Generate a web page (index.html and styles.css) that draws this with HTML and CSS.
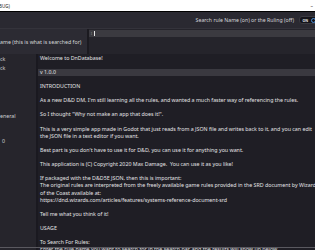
FILE: index.html
```html
<!DOCTYPE html>
<html>
<head>
<meta charset="utf-8">
<link rel="stylesheet" href="styles.css">
</head>
<body>
<div class="window">
  <div class="titlebar">
    <span class="title">BUG)</span>
    <span class="winctl">&ndash;</span>
  </div>
  <div class="toolbar">
    <span class="toolbar-label">Search rule Name (on) or the Ruling (off)</span>
    <span class="toggle"><span class="toggle-text">ON</span><span class="toggle-knob"></span></span>
  </div>
  <div class="searchrow">
    <div class="search-label">ame (this is what is searched for)</div>
    <div class="search-field">
      <div class="input"><span class="input-icon">I</span><span class="caret"></span></div>
    </div>
  </div>
  <div class="content">
    <div class="sidebar">
      <div class="side-item s1">ck</div>
      <div class="side-item s2">ck</div>
      <div class="side-item s3">eneral</div>
      <div class="side-item s4">0</div>
    </div>
    <div class="main">
      <p class="line">Welcome to DnDatabase!</p>
      <p class="line">&nbsp;</p>
      <p class="line selected">v 1.0.0</p>
      <p class="line">&nbsp;</p>
      <p class="line">INTRODUCTION</p>
      <p class="line">&nbsp;</p>
      <p class="line">As a new D&amp;D DM, I'm still learning all the rules, and wanted a much faster way of referencing the rules.</p>
      <p class="line">&nbsp;</p>
      <p class="line">So I thought "Why not make an app that does it!".</p>
      <p class="line">&nbsp;</p>
      <p class="line">This is a very simple app made in Godot that just reads from a JSON file and writes back to it, and you can edit</p>
      <p class="line">the JSON file in a text editor if you want.</p>
      <p class="line">&nbsp;</p>
      <p class="line">Best part is you don't have to use it for D&amp;D, you can use it for anything you want.</p>
      <p class="line">&nbsp;</p>
      <p class="line">This application is (C) Copyright 2020 Max Damage.&nbsp; You can use it as you like!</p>
      <p class="line">&nbsp;</p>
      <p class="line">If packaged with the D&amp;D5E JSON, then this is important:</p>
      <p class="line">The original rules are interpreted from the freely available game rules provided in the SRD document by Wizards</p>
      <p class="line">of the Coast available at:</p>
      <p class="line">https://dnd.wizards.com/articles/features/systems-reference-document-srd</p>
      <p class="line">&nbsp;</p>
      <p class="line">Tell me what you think of it!</p>
      <p class="line">&nbsp;</p>
      <p class="line">USAGE</p>
      <p class="line">&nbsp;</p>
      <p class="line">To Search For Rules:</p>
      <p class="line">Enter the rule name you want to search for in the search bar, and the results will show up below.</p>
    </div>
  </div>
  <div class="bottom-line"></div>
</div>
</body>
</html>
```
FILE: styles.css
```css
html, body {
  margin: 0;
  padding: 0;
  width: 315px;
  height: 250px;
  overflow: hidden;
  background: #1f1e25;
  font-family: "Noto Sans", "Open Sans", sans-serif;
}
.window {
  position: relative;
  width: 315px;
  height: 250px;
  overflow: hidden;
  display: flex;
  flex-direction: column;
}
.titlebar {
  height: 11px;
  flex: 0 0 11px;
  background: #ffffff;
  border-bottom: 1px solid #000000;
  display: flex;
  align-items: center;
  justify-content: space-between;
  font-size: 4.5px;
  color: #222;
}
.title { margin-left: -1px; }
.winctl { margin-right: 2px; font-size: 5px; }
.toolbar {
  flex: 0 0 16px;
  height: 16px;
  background: #2a2931;
  display: flex;
  align-items: center;
  justify-content: flex-end;
  gap: 5px;
}
.toolbar-label {
  color: #d6d6d9;
  font-size: 5.2px;
  white-space: nowrap;
}
.toggle {
  width: 18px;
  height: 6px;
  border-radius: 3px;
  background: #15141a;
  border: 0.5px solid #3a3940;
  display: flex;
  align-items: center;
  margin-right: -4px;
  flex-shrink: 0;
}
.toggle-text {
  font-size: 3.5px;
  color: #e8e8e8;
  margin-left: 2.5px;
  font-weight: bold;
}
.toggle-knob {
  width: 5px;
  height: 5px;
  border-radius: 50%;
  border: 1px solid #4a8fd8;
  box-sizing: border-box;
  margin-left: 3px;
}
.searchrow {
  flex: 0 0 26px;
  height: 26px;
  display: grid;
  grid-template-columns: 89px 1fr;
  border-top: 1px solid #34333b;
  box-sizing: border-box;
}
.search-label {
  background: #2c2b33;
  border-right: 2px solid #1b1a20;
  color: #d6d6d9;
  font-size: 5.3px;
  white-space: nowrap;
  display: flex;
  align-items: center;
  overflow: hidden;
  padding-top: 1px;
}
.search-field {
  background: #25242b;
  padding-top: 1px;
}
.input {
  height: 7px;
  background: #3b3a40;
  display: flex;
  align-items: center;
  gap: 2px;
  padding-left: 2px;
}
.input-icon {
  font-size: 3px;
  color: #9a9a9e;
}
.caret {
  width: 1px;
  height: 5px;
  background: #e6e6e6;
}
.content {
  flex: 1;
  display: grid;
  grid-template-columns: 38px 1fr;
  min-height: 0;
}
.sidebar {
  background: #26252c;
  border-right: 2px solid #1a1920;
  color: #cfcfd3;
  font-size: 5.3px;
  overflow: hidden;
}
.side-item {
  line-height: 7px;
  height: 7px;
  white-space: nowrap;
}
.s1 { margin-top: 1.5px; }
.s2 { margin-top: 2px; }
.s3 { margin-top: 41px; }
.s4 { margin-top: 18px; padding-left: 2px; }
.main {
  background: #1f1e25;
  color: #e4e4e6;
  font-size: 5.3px;
  padding-top: 0.5px;
  overflow: hidden;
}
.line {
  margin: 0;
  padding-left: 2px;
  line-height: 7.12px;
  height: 7.12px;
  white-space: nowrap;
}
.selected {
  background: #3a3940;
}
.bottom-line {
  position: absolute;
  left: 0;
  right: 0;
  top: 247px;
  height: 1px;
  background: #5a5960;
}
```
